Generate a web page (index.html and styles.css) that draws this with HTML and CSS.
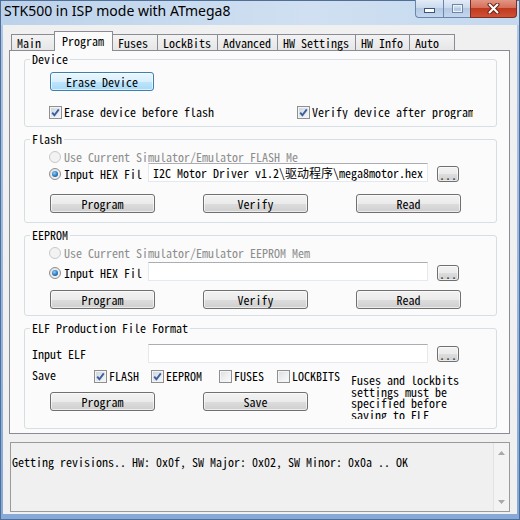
FILE: index.html
```html
<!DOCTYPE html>
<html>
<head>
<meta charset="utf-8">
<title>STK500 in ISP mode with ATmega8</title>
<link rel="stylesheet" href="styles.css">
</head>
<body>
<div class="window">
  <div class="titlebar">
    <div class="title">STK500 in ISP mode with ATmega8</div>
    <div class="caption">
      <div class="cbtn cmin"><svg width="11" height="5" viewBox="0 0 11 5"><rect x="0.5" y="0.5" width="10" height="4" fill="#fff" stroke="#3b5679"/></svg></div>
      <div class="cbtn cmax"><svg width="11" height="9" viewBox="0 0 11 9"><rect x="0.5" y="0.5" width="10" height="8" fill="none" stroke="#6f87a6"/><rect x="1.5" y="1.5" width="8" height="6" fill="none" stroke="#eef3f9"/></svg></div>
      <div class="cbtn cclose"><svg width="13" height="11" viewBox="0 0 13 11"><path d="M2.5 1.5 L10.5 9.5 M10.5 1.5 L2.5 9.5" stroke="#6b2418" stroke-width="4" stroke-linecap="round"/><path d="M2.5 1.5 L10.5 9.5 M10.5 1.5 L2.5 9.5" stroke="#fff" stroke-width="2" stroke-linecap="round"/></svg></div>
    </div>
  </div>
  <div class="client">
    <div class="tabs">
      <div class="tab">Main</div>
      <div class="tab active">Program</div>
      <div class="tab">Fuses</div>
      <div class="tab">LockBits</div>
      <div class="tab">Advanced</div>
      <div class="tab">HW Settings</div>
      <div class="tab">HW Info</div>
      <div class="tab">Auto</div>
    </div>
    <div class="panel">
      <fieldset class="group g-device">
        <legend>Device</legend>
        <button class="btn hot">Erase Device</button>
        <div class="check-row">
          <label class="chk chk-first"><span class="cb on"><svg width="9" height="9" viewBox="0 0 9 9"><path d="M1.2 4.6 L3.4 7.2 L7.8 1.4" fill="none" stroke="#3d5e9e" stroke-width="1.9"/></svg></span>Erase device before flash</label>
          <label class="chk chk-second"><span class="cb on"><svg width="9" height="9" viewBox="0 0 9 9"><path d="M1.2 4.6 L3.4 7.2 L7.8 1.4" fill="none" stroke="#3d5e9e" stroke-width="1.9"/></svg></span>Verify device after program</label>
        </div>
      </fieldset>

      <fieldset class="group g-mem">
        <legend>Flash</legend>
        <div class="radio-row dis"><span class="rb dis"></span>Use Current Simulator/Emulator FLASH Me</div>
        <div class="file-row">
          <div class="radio-lbl"><span class="rb on"></span>Input HEX Fil</div>
          <div class="field">I2C Motor Driver v1.2\驱动程序\mega8motor.hex</div>
          <button class="btn dots">...</button>
        </div>
        <div class="btn-row">
          <button class="btn">Program</button>
          <button class="btn">Verify</button>
          <button class="btn">Read</button>
        </div>
      </fieldset>

      <fieldset class="group g-mem g-eeprom">
        <legend>EEPROM</legend>
        <div class="radio-row dis"><span class="rb dis"></span>Use Current Simulator/Emulator EEPROM Mem</div>
        <div class="file-row">
          <div class="radio-lbl"><span class="rb on"></span>Input HEX Fil</div>
          <div class="field"></div>
          <button class="btn dots">...</button>
        </div>
        <div class="btn-row">
          <button class="btn">Program</button>
          <button class="btn">Verify</button>
          <button class="btn">Read</button>
        </div>
      </fieldset>

      <fieldset class="group g-elf">
        <legend>ELF Production File Format</legend>
        <div class="file-row elf-row">
          <div class="plain-lbl">Input ELF</div>
          <div class="field"></div>
          <button class="btn dots">...</button>
        </div>
        <div class="elf-bottom">
          <div class="elf-left">
            <div class="save-row">
              <span class="save-lbl">Save</span>
              <label class="chk"><span class="cb on"><svg width="9" height="9" viewBox="0 0 9 9"><path d="M1.2 4.6 L3.4 7.2 L7.8 1.4" fill="none" stroke="#3d5e9e" stroke-width="1.9"/></svg></span>FLASH</label>
              <label class="chk"><span class="cb on"><svg width="9" height="9" viewBox="0 0 9 9"><path d="M1.2 4.6 L3.4 7.2 L7.8 1.4" fill="none" stroke="#3d5e9e" stroke-width="1.9"/></svg></span>EEPROM</label>
              <label class="chk"><span class="cb"></span>FUSES</label>
              <label class="chk"><span class="cb"></span>LOCKBITS</label>
            </div>
            <div class="btn-row elf-btns">
              <button class="btn">Program</button>
              <button class="btn">Save</button>
            </div>
          </div>
          <div class="note">Fuses and lockbits settings must be specified before saving to ELF</div>
        </div>
      </fieldset>
    </div>
    <div class="status">
      <div class="log">Getting revisions.. HW: 0x0f, SW Major: 0x02, SW Minor: 0x0a .. OK</div>
      <div class="vscroll">
        <svg width="7" height="4" viewBox="0 0 7 4"><path d="M0 4 L3.5 0 L7 4 Z" fill="#a8a8a8"/></svg>
        <svg width="7" height="4" viewBox="0 0 7 4"><path d="M0 0 L3.5 4 L7 0 Z" fill="#a8a8a8"/></svg>
      </div>
    </div>
  </div>
</div>
</body>
</html>
```
FILE: styles.css
```css
* { box-sizing: border-box; }

body {
  margin: 0;
  font-family: "Noto Sans Mono CJK SC", "Liberation Mono", monospace;
  font-size: 12px;
  line-height: 12px;
  color: #000;
}

.window {
  width: 520px;
  height: 520px;
  display: flex;
  flex-direction: column;
  border: 1px solid #4f6f98;
  background: linear-gradient(to bottom, #c3d6ed 0, #a9c4e6 40px, #86a9d8 100%);
}

.titlebar {
  height: 24px;
  display: flex;
  justify-content: space-between;
  align-items: flex-start;
  background: linear-gradient(to right, #bcd2ea, #d0e0f2 60%, #c4d8ee);
}

.title {
  font-family: "Noto Sans", "Open Sans", sans-serif;
  font-size: 14px;
  line-height: 18px;
  padding: 1px 0 0 3px;
  color: #000;
}

.caption {
  display: flex;
  margin-right: 2px;
  margin-top: -1px;
}

.cbtn {
  height: 18px;
  display: flex;
  align-items: center;
  justify-content: center;
  border: 1px solid #6a86ab;
  border-top: none;
}

.cmin {
  width: 28px;
  border-radius: 0 0 0 4px;
  border-right: none;
  background: linear-gradient(to bottom, #e3ecf7 0, #cbdaee 45%, #b5c9e4 50%, #c3d6ee 100%);
  padding-top: 4px;
}

.cmax {
  width: 27px;
  border-right: none;
  background: linear-gradient(to bottom, #e3ecf7 0, #cbdaee 45%, #b5c9e4 50%, #c3d6ee 100%);
}

.cclose {
  width: 47px;
  border-radius: 0 0 4px 0;
  border-color: #7e2e20;
  background: linear-gradient(to bottom, #e39584 0, #d5705a 45%, #c0391f 50%, #cf5236 100%);
}

.client {
  flex: 1;
  margin: 0 2px 5px 2px;
  background: #f0f0f0;
  padding: 6px 7px 2px 6px;
  display: flex;
  flex-direction: column;
}

/* tabs */
.tabs {
  display: flex;
  align-items: flex-end;
  height: 20px;
  padding-left: 2px;
  margin-bottom: -1px;
  position: relative;
  z-index: 1;
}

.tab {
  height: 16px;
  min-width: 46px;
  margin-bottom: 1px;
  margin-right: -1px;
  padding: 0 6px 0 5px;
  border: 1px solid #898c95;
  border-bottom: none;
  background: linear-gradient(to bottom, #f3f3f3, #e6e6e6);
  line-height: 15px;
  white-space: nowrap;
}

.tab.active {
  height: 20px;
  margin: 0 -1px 0 -2px;
  padding: 1px 8px 0 7px;
  background: #fbfbfb;
  line-height: 15px;
  position: relative;
  z-index: 2;
}

.panel {
  height: 384px;
  border: 1px solid #898c95;
  background: #fbfbfb;
  padding: 2px 12px 0 14px;
  display: flex;
  flex-direction: column;
  gap: 6px;
}

/* group boxes */
.group {
  margin: 0;
  padding: 0;
  min-width: 0;
  border: 1px solid #d5dfe5;
  border-radius: 3px;
}

.group legend {
  padding: 0 2px;
  margin-left: 5px;
  line-height: 12px;
}

.g-device { padding: 7px 0 7px 0; }

.btn {
  font: inherit;
  color: #000;
  height: 19px;
  width: 105px;
  padding: 0;
  border: 1px solid #707070;
  border-radius: 3px;
  background: linear-gradient(to bottom, #f2f2f2 0, #ebebeb 50%, #dddddd 51%, #cfcfcf 100%);
  box-shadow: inset 0 0 0 1px rgba(255,255,255,0.6);
  line-height: 15px;
  margin: 0;
}

.btn.hot {
  width: 104px;
  margin-left: 25px;
  border-color: #3c7fb1;
  background: linear-gradient(to bottom, #eaf6fd 0, #d9f0fc 50%, #bee6fd 51%, #a7d9f5 100%);
  display: block;
}

.check-row {
  display: flex;
  margin-top: 14px;
  margin-left: 24px;
  height: 14px;
  align-items: center;
}

.chk {
  display: flex;
  align-items: center;
  gap: 2px;
  white-space: nowrap;
  line-height: 14px;
}

.chk-first { width: 248px; }
.chk-second { width: 176px; overflow: hidden; }

.cb {
  flex: none;
  width: 13px;
  height: 13px;
  border: 1px solid #8e8f8f;
  background: linear-gradient(135deg, #d9dde2 0, #eceef0 50%, #fbfbfb 100%);
  box-shadow: inset 0 0 0 1px #f4f4f4;
  display: flex;
  align-items: center;
  justify-content: center;
}

.cb.on {
  background: linear-gradient(135deg, #c9d2dd 0, #e4e9ef 55%, #f7f8fa 100%);
}

/* memory groups */
.g-mem { padding: 5px 0 9px 0; }

.radio-row {
  display: flex;
  align-items: center;
  gap: 3px;
  height: 14px;
  margin-left: 24px;
  white-space: nowrap;
}

.radio-row.dis { color: #8d8d8d; }

.rb {
  flex: none;
  width: 12px;
  height: 12px;
  border-radius: 50%;
  border: 1px solid #8e8f8f;
  background: radial-gradient(circle at 60% 60%, #fbfbfb 0, #e4e4e4 70%, #d0d0d0 100%);
  display: flex;
  align-items: center;
  justify-content: center;
}

.rb.on::after {
  content: "";
  width: 6px;
  height: 6px;
  border-radius: 50%;
  background: radial-gradient(circle at 40% 35%, #8dd0f6 0, #2b78c0 55%, #123f74 100%);
}

.rb.dis {
  border-color: #c8c8c8;
  background: #f2f2f2;
}

.file-row {
  display: flex;
  align-items: flex-end;
  height: 19px;
  margin-top: -1px;
}

.radio-lbl {
  width: 99px;
  margin-left: 24px;
  display: flex;
  align-items: center;
  gap: 3px;
  align-self: center;
  padding-top: 2px;
  white-space: nowrap;
}

.field {
  width: 280px;
  height: 19px;
  border: 1px solid #e3e9ef;
  border-top-color: #abadb3;
  background: #fff;
  padding: 0 0 0 4px;
  line-height: 17px;
  white-space: nowrap;
  overflow: hidden;
}

.btn.dots {
  width: 22px;
  height: 16px;
  margin-left: 9px;
  line-height: 12px;
  padding-top: 2px;
  font-size: 12px;
  color: #333;
}

.btn-row {
  display: flex;
  gap: 48px;
  margin-top: 12px;
  margin-left: 25px;
}

.g-eeprom { padding-bottom: 6px; }
.g-eeprom .file-row { margin-top: 2px; }
.g-eeprom .btn-row { margin-top: 9px; }

/* ELF */
.g-elf { padding: 10px 0 9px 0; }

.elf-row { margin-top: 0; align-items: center; }

.plain-lbl {
  width: 116px;
  margin-left: 7px;
}

.elf-row .btn.dots { align-self: center; }

.elf-bottom {
  display: flex;
  margin-top: 6px;
}

.elf-left { width: 326px; }

.save-row {
  display: grid;
  grid-template-columns: 62px 57px 68px 58px auto;
  height: 14px;
  align-items: center;
  margin-left: 7px;
}

.save-lbl { line-height: 12px; margin-top: -2px; }

.elf-btns { margin-top: 9px; }

.note {
  width: 130px;
  height: 45px;
  margin-top: 5px;
  overflow: hidden;
  line-height: 11.7px;
}

/* status */
.status {
  margin-top: 8px;
  margin-left: 1px;
  flex: 1;
  border: 1px solid #9a9a9a;
  background: #f0f0f0;
  display: flex;
}

.log {
  flex: 1;
  padding: 13px 0 0 1px;
  white-space: nowrap;
}

.vscroll {
  width: 16px;
  border-left: 1px solid #e2e2e2;
  background: #f3f3f3;
  display: flex;
  flex-direction: column;
  justify-content: space-between;
  align-items: center;
  padding: 8px 0 7px;
}
```
